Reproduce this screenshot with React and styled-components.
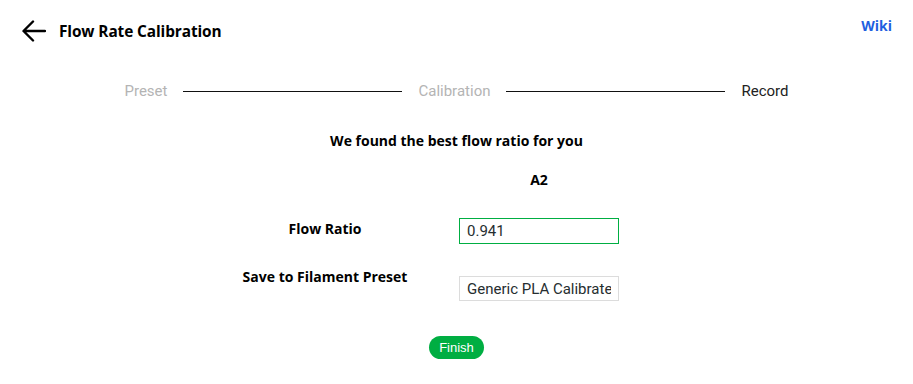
import React from "react";
import styled, { createGlobalStyle } from "styled-components";

const GlobalStyle = createGlobalStyle`
  body {
    margin: 0;
    background: #ffffff;
    font-family: "Open Sans", "Noto Sans", sans-serif;
    color: #000;
  }
`;

const Page = styled.div`
  width: 913px;
  height: 384px;
  position: relative;
  overflow: hidden;
`;

const Header = styled.div`
  display: flex;
  align-items: center;
  justify-content: space-between;
  padding: 14px 21px 0 22px;
  height: 34px;
`;

const TitleGroup = styled.div`
  display: flex;
  align-items: center;
  gap: 13px;
`;

const BackButton = styled.button`
  border: none;
  background: none;
  padding: 0;
  display: flex;
  cursor: pointer;
`;

const Title = styled.h1`
  margin: 0;
  font-size: 15.4px;
  font-weight: 700;
  letter-spacing: -0.1px;
`;

const WikiLink = styled.a`
  font-size: 14px;
  font-weight: 700;
  color: #1f5fe0;
  text-decoration: none;
  align-self: flex-start;
  margin-top: 2px;
`;

const Steps = styled.div`
  display: flex;
  align-items: center;
  gap: 16px;
  width: 664px;
  margin: 34px auto 0;
`;

const StepLabel = styled.span`
  font-family: Roboto, "Noto Sans", sans-serif;
  font-size: 15px;
  color: ${(p) => (p.active ? "#222" : "#b4b4b4")};
  white-space: nowrap;
`;

const StepLine = styled.div`
  flex: 1;
  height: 1px;
  background: #111;
`;

const Body = styled.div`
  display: flex;
  flex-direction: column;
  align-items: center;
  margin-top: 31px;
`;

const Heading = styled.div`
  font-size: 14px;
  font-weight: 700;
`;

const Form = styled.div`
  align-self: flex-start;
  margin-left: 230px;
  margin-top: 18px;
  display: grid;
  grid-template-columns: 190px 160px;
  column-gap: 39px;
`;

const Label = styled.div`
  font-size: 14px;
  font-weight: 700;
  text-align: center;
  margin-top: ${(p) => p.offset}px;
`;

const Value = styled.div`
  font-size: 14px;
  font-weight: 700;
  text-align: center;
  height: 26px;
  line-height: 24px;
`;

const Input = styled.input`
  box-sizing: border-box;
  width: 160px;
  height: ${(p) => p.h}px;
  margin-top: ${(p) => p.offset}px;
  border: 1px solid ${(p) => (p.focused ? "#00ae42" : "#dcdcdc")};
  outline: none;
  padding: 0 7px;
  font-family: Roboto, "Noto Sans", sans-serif;
  font-size: 15px;
  color: #262e30;
  background: #fff;
`;

const FinishButton = styled.button`
  margin-top: 35px;
  width: 55px;
  height: 23px;
  border: none;
  border-radius: 12px;
  background: #00ae42;
  color: #fff;
  font-family: "Liberation Sans", Arial, sans-serif;
  font-size: 13px;
  padding: 0;
  cursor: pointer;
`;

const ArrowIcon = () => (
  <svg width="24" height="22" viewBox="0 0 24 22" fill="none">
    <path
      d="M23 11H2M11 1.5L1.5 11L11 20.5"
      stroke="#000"
      strokeWidth="2.4"
      strokeLinecap="round"
      strokeLinejoin="round"
    />
  </svg>
);

export default function App() {
  return (
    <Page>
      <GlobalStyle />
      <Header>
        <TitleGroup>
          <BackButton>
            <ArrowIcon />
          </BackButton>
          <Title>Flow Rate Calibration</Title>
        </TitleGroup>
        <WikiLink href="#">Wiki</WikiLink>
      </Header>

      <Steps>
        <StepLabel>Preset</StepLabel>
        <StepLine />
        <StepLabel>Calibration</StepLabel>
        <StepLine />
        <StepLabel active>Record</StepLabel>
      </Steps>

      <Body>
        <Heading>We found the best flow ratio for you</Heading>
        <Form>
          <div />
          <Value>A2</Value>
          <Label offset={25}>Flow Ratio</Label>
          <Input h={26} offset={24} focused defaultValue="0.941" />
          <Label offset={23}>Save to Filament Preset</Label>
          <Input h={25} offset={32} defaultValue="Generic PLA Calibrated" />
        </Form>
        <FinishButton>Finish</FinishButton>
      </Body>
    </Page>
  );
}
